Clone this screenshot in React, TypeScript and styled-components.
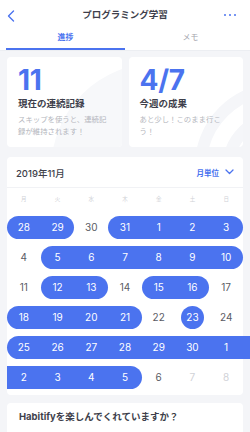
import React from "react";
import styled, { createGlobalStyle } from "styled-components";

const BLUE = "#4b73ef";
const DARK = "#3e3f4b";

const GlobalStyle = createGlobalStyle`
  * { box-sizing: border-box; }
  body {
    margin: 0;
    background: #f4f5f8;
    font-family: "Inter", "Noto Sans CJK JP", sans-serif;
    -webkit-font-smoothing: antialiased;
  }
`;

const Page = styled.div`
  width: 250px;
  min-height: 432px;
  overflow: hidden;
`;

const TopBar = styled.header`
  height: 30px;
  background: #fff;
  display: grid;
  grid-template-columns: 40px 1fr 40px;
  align-items: center;
`;

const BackButton = styled.div`
  display: flex;
  align-items: center;
  padding-left: 7px;
  padding-top: 1px;
`;

const Title = styled.h1`
  margin: 0;
  text-align: center;
  font-size: 9.5px;
  font-weight: 700;
  color: ${DARK};
  line-height: 14px;
`;

const MoreButton = styled.div`
  display: flex;
  justify-content: flex-end;
  padding-right: 14px;
  gap: 2.5px;
`;

const Dot = styled.span`
  width: 2.5px;
  height: 2.5px;
  border-radius: 50%;
  background: ${BLUE};
`;

const Tabs = styled.nav`
  height: 21px;
  background: #fff;
  display: flex;
  padding-left: 6px;
  border-bottom: 1px solid #eceef2;
`;

const Tab = styled.div<{ $active?: boolean }>`
  height: 20px;
  flex: ${(p) => (p.$active ? "0 0 119px" : "1")};
  padding-left: ${(p) => (p.$active ? "0" : "6px")};
  display: flex;
  justify-content: center;
  font-size: 8px;
  line-height: 14px;
  font-weight: ${(p) => (p.$active ? 700 : 400)};
  color: ${(p) => (p.$active ? BLUE : "#a3a5ad")};
  border-bottom: 2px solid ${(p) => (p.$active ? BLUE : "transparent")};
`;

const Content = styled.main`
  padding: 6px 7px 0;
`;

const StatsRow = styled.div`
  display: grid;
  grid-template-columns: 1fr 1fr;
  gap: 7px;
`;

const StatCard = styled.section`
  position: relative;
  overflow: hidden;
  height: 90px;
  background: #fff;
  border-radius: 4px;
  padding: 9px 10px 0 11px;
`;

const Deco = styled.svg`
  position: absolute;
  left: 0;
  top: 0;
  width: 100%;
  height: 100%;
  pointer-events: none;
`;

const StatBody = styled.div`
  position: relative;
`;

const BigNumber = styled.div`
  font-family: "Inter", sans-serif;
  font-size: 28px;
  line-height: 28px;
  font-weight: 700;
  color: ${BLUE};
  letter-spacing: -0.3px;
`;

const StatTitle = styled.div`
  margin-top: 3px;
  font-size: 9.5px;
  line-height: 13px;
  font-weight: 700;
  color: ${DARK};
`;

const StatNote = styled.div`
  margin-top: 4px;
  font-size: 7.4px;
  line-height: 12px;
  color: #b4b6bd;
`;

const CalendarCard = styled.section`
  margin-top: 10px;
  background: #fff;
  border-radius: 4px;
  padding-bottom: 3px;
`;

const CalHeader = styled.div`
  height: 31px;
  display: flex;
  align-items: center;
  justify-content: space-between;
  padding: 0 9px 0 9px;
  border-bottom: 1px solid #f1f2f5;
`;

const Month = styled.div`
  font-size: 9.5px;
  font-weight: 500;
  color: ${DARK};
  padding-top: 1px;
`;

const Range = styled.div`
  display: flex;
  align-items: center;
  gap: 6px;
  font-size: 7.5px;
  font-weight: 700;
  color: ${BLUE};
`;

const Grid = styled.div`
  display: grid;
  grid-template-columns: repeat(7, 1fr);
`;

const WeekRow = styled(Grid)`
  height: 21px;
  align-items: center;
  margin-bottom: 3px;
`;

const WeekLabel = styled.div`
  text-align: center;
  font-size: 5.5px;
  color: #cfd1d6;
`;

const DayCell = styled.div`
  height: 30px;
  display: flex;
  align-items: center;
  justify-content: center;
`;

const Bar = styled.div<{ $l: boolean; $r: boolean; $bleed?: boolean }>`
  height: 23px;
  flex: 1;
  margin-right: ${(p) => (p.$bleed ? "-8px" : "0")};
  padding-right: ${(p) => (p.$bleed ? "8px" : "0")};
  display: flex;
  align-items: center;
  justify-content: center;
  background: ${BLUE};
  color: #fff;
  border-radius: ${(p) =>
    `${p.$l ? "11.5px" : "0"} ${p.$r ? "11.5px" : "0"} ${p.$r ? "11.5px" : "0"} ${p.$l ? "11.5px" : "0"}`};
`;

const Circle = styled.div`
  width: 23px;
  height: 23px;
  border-radius: 50%;
  background: ${BLUE};
  color: #fff;
  display: flex;
  align-items: center;
  justify-content: center;
`;

const Num = styled.span<{ $tone?: "dark" | "light" | "white" }>`
  font-family: "Inter", sans-serif;
  font-size: 10px;
  color: ${(p) => (p.$tone === "light" ? "#d0d2d7" : p.$tone === "white" ? "#fff" : "#5a5b64")};
`;

const FeedbackCard = styled.section`
  margin-top: 8px;
  background: #fff;
  border-radius: 4px 4px 0 0;
  height: 40px;
  padding: 7px 12px;
  font-size: 9.5px;
  font-weight: 700;
  color: ${DARK};
  line-height: 14px;
`;

type Day = {
  n: number;
  on?: boolean;
  l?: boolean;
  r?: boolean;
  single?: boolean;
  bleed?: boolean;
  light?: boolean;
};

const weeks: Day[][] = [
  [
    { n: 28, on: true, l: true },
    { n: 29, on: true, r: true },
    { n: 30 },
    { n: 31, on: true, l: true },
    { n: 1, on: true },
    { n: 2, on: true },
    { n: 3, on: true, r: true },
  ],
  [
    { n: 4 },
    { n: 5, on: true, l: true },
    { n: 6, on: true },
    { n: 7, on: true },
    { n: 8, on: true },
    { n: 9, on: true },
    { n: 10, on: true, r: true },
  ],
  [
    { n: 11 },
    { n: 12, on: true, l: true },
    { n: 13, on: true, r: true },
    { n: 14 },
    { n: 15, on: true, l: true },
    { n: 16, on: true, r: true },
    { n: 17 },
  ],
  [
    { n: 18, on: true, l: true },
    { n: 19, on: true },
    { n: 20, on: true },
    { n: 21, on: true, r: true },
    { n: 22 },
    { n: 23, single: true },
    { n: 24 },
  ],
  [
    { n: 25, on: true, l: true },
    { n: 26, on: true },
    { n: 27, on: true },
    { n: 28, on: true },
    { n: 29, on: true },
    { n: 30, on: true },
    { n: 1, on: true, bleed: true },
  ],
  [
    { n: 2, on: true },
    { n: 3, on: true },
    { n: 4, on: true },
    { n: 5, on: true, r: true },
    { n: 6 },
    { n: 7, light: true },
    { n: 8, light: true },
  ],
];

const weekdays = ["月", "火", "水", "木", "金", "土", "日"];

function DayView({ d }: { d: Day }) {
  if (d.single) {
    return (
      <DayCell>
        <Circle>
          <Num $tone="white">{d.n}</Num>
        </Circle>
      </DayCell>
    );
  }
  if (d.on) {
    return (
      <DayCell>
        <Bar $l={!!d.l} $r={!!d.r} $bleed={d.bleed}>
          <Num $tone="white">{d.n}</Num>
        </Bar>
      </DayCell>
    );
  }
  return (
    <DayCell>
      <Num $tone={d.light ? "light" : "dark"}>{d.n}</Num>
    </DayCell>
  );
}

export default function App() {
  return (
    <Page>
      <GlobalStyle />
      <TopBar>
        <BackButton>
          <svg width="8" height="12" viewBox="0 0 8 12">
            <path d="M6.5 1 L1.5 6 L6.5 11" fill="none" stroke={BLUE} strokeWidth="1.4" strokeLinecap="round" strokeLinejoin="round" />
          </svg>
        </BackButton>
        <Title>プログラミング学習</Title>
        <MoreButton>
          <Dot />
          <Dot />
          <Dot />
        </MoreButton>
      </TopBar>
      <Tabs>
        <Tab $active>進捗</Tab>
        <Tab>メモ</Tab>
      </Tabs>
      <Content>
        <StatsRow>
          <StatCard>
            <Deco viewBox="0 0 114 90" preserveAspectRatio="none">
              <circle cx="150" cy="112" r="106" fill="#f7f8fa" />
            </Deco>
            <StatBody>
              <BigNumber>11</BigNumber>
              <StatTitle>現在の連続記録</StatTitle>
              <StatNote>スキップを使うと、連続記録が維持されます！</StatNote>
            </StatBody>
          </StatCard>
          <StatCard>
            <Deco viewBox="0 0 115 90" preserveAspectRatio="none">
              <circle cx="150" cy="110" r="78" fill="none" stroke="#f5f6f9" strokeWidth="12" />
              <circle cx="150" cy="110" r="50" fill="none" stroke="#f5f6f9" strokeWidth="12" />
            </Deco>
            <StatBody>
              <BigNumber>4/7</BigNumber>
              <StatTitle>今週の成果</StatTitle>
              <StatNote>あと少し！このまま行こう！</StatNote>
            </StatBody>
          </StatCard>
        </StatsRow>

        <CalendarCard>
          <CalHeader>
            <Month>2019年11月</Month>
            <Range>
              月単位
              <svg width="9" height="6" viewBox="0 0 9 6">
                <path d="M1 1 L4.5 4.5 L8 1" fill="none" stroke={BLUE} strokeWidth="1.3" strokeLinecap="round" strokeLinejoin="round" />
              </svg>
            </Range>
          </CalHeader>
          <WeekRow>
            {weekdays.map((w) => (
              <WeekLabel key={w}>{w}</WeekLabel>
            ))}
          </WeekRow>
          {weeks.map((week, i) => (
            <Grid key={i}>
              {week.map((d, j) => (
                <DayView key={j} d={d} />
              ))}
            </Grid>
          ))}
        </CalendarCard>

        <FeedbackCard>Habitifyを楽しんでくれていますか？</FeedbackCard>
      </Content>
    </Page>
  );
}
